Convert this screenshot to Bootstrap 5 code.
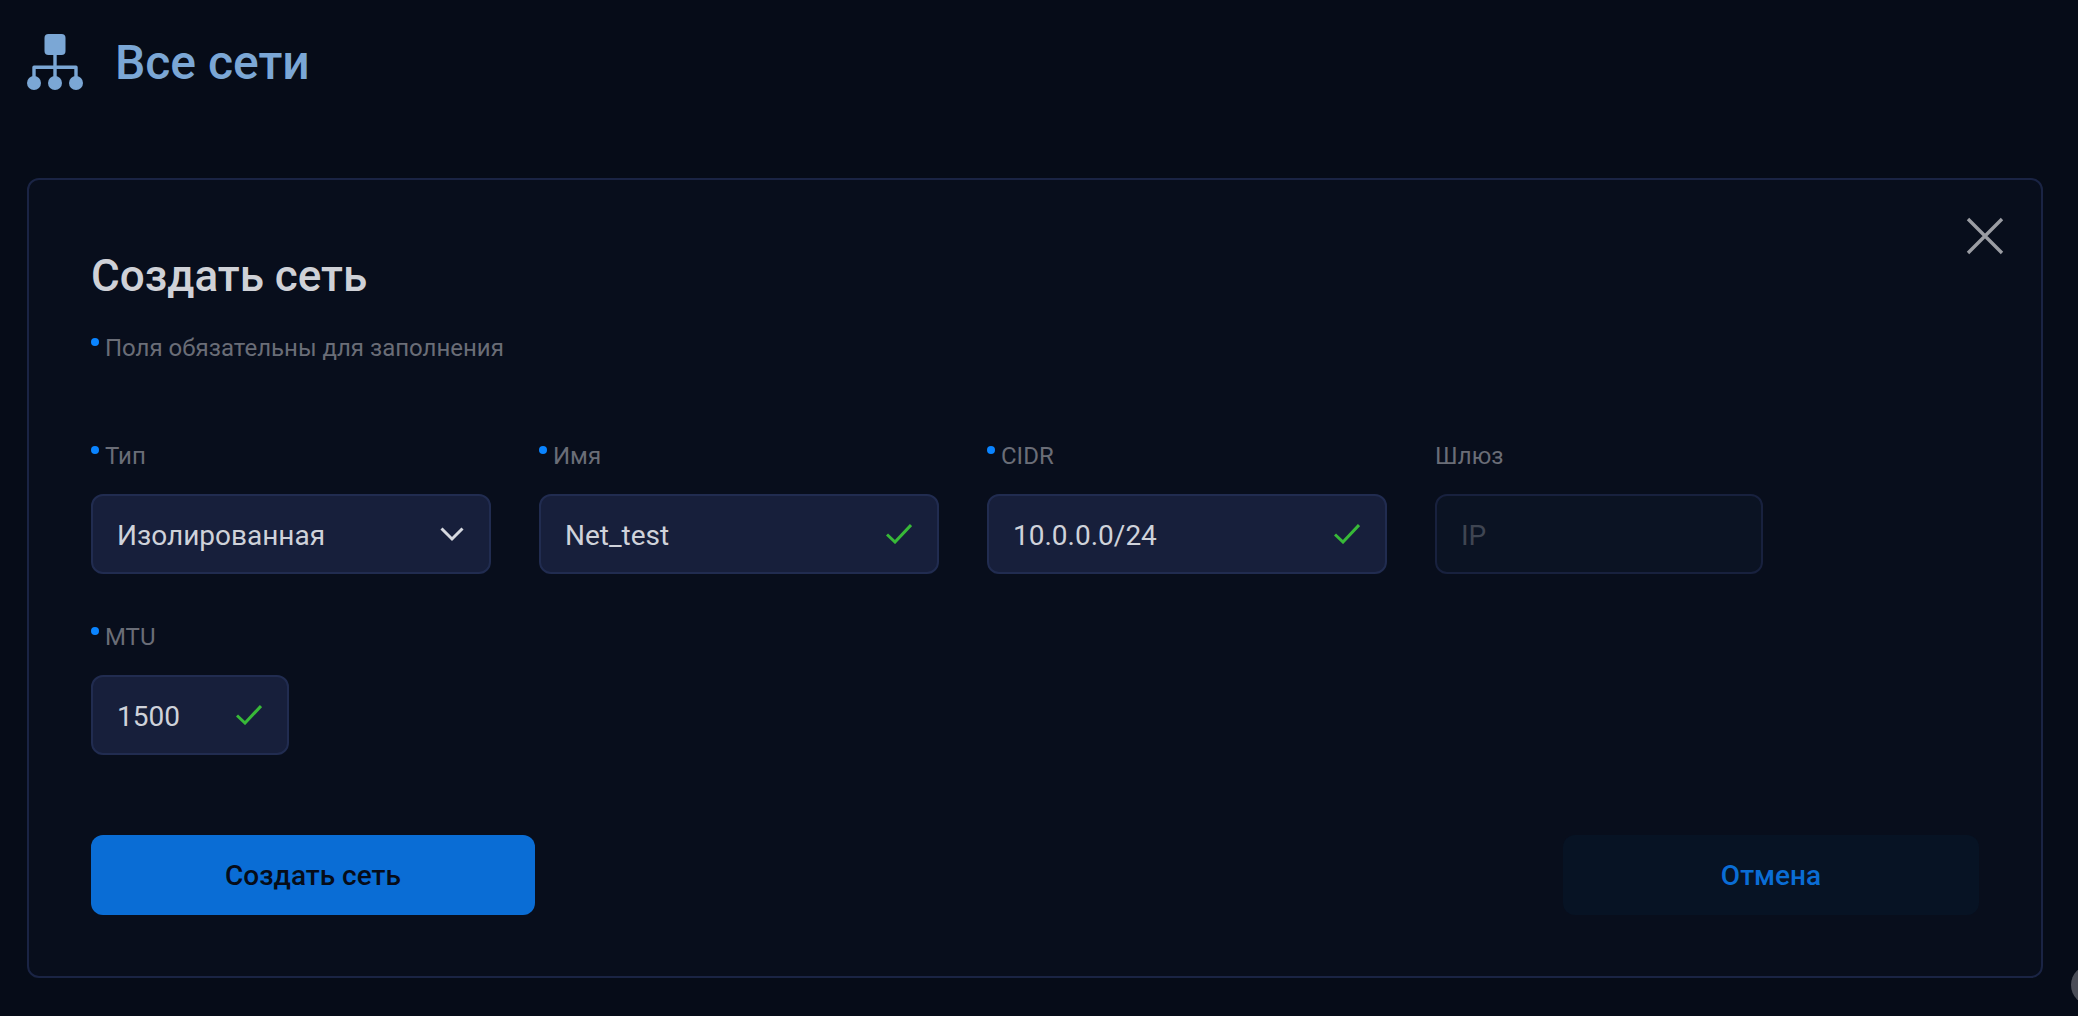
<!DOCTYPE html>
<html lang="ru">
<head>
<meta charset="utf-8">
<title>Все сети</title>
<link href="https://cdn.jsdelivr.net/npm/bootstrap@5.3.0/dist/css/bootstrap.min.css" rel="stylesheet">
<style>
html,body{height:100%;}
body{background:#060c18;font-family:Roboto,"Liberation Sans",sans-serif;overflow:hidden;padding:34px 35px 0 27px;}
.page-head{height:56px;gap:32px;margin-bottom:88px;}
.page-title{font-size:48px;font-weight:500;line-height:56px;color:#7ba7d5;margin:0;padding-top:2px;}
.net-card{height:800px;background:#080e1c;border:2px solid #1a2444;border-radius:12px;padding:70px 62px 0 62px;}
.close-x{top:36px;right:36px;width:40px;height:40px;padding:0;background:none;border:0;}
.form-head{font-size:44px;font-weight:500;line-height:52px;color:#cfd1d7;margin:0 0 32px;}
.req-note,.fld-label{font-size:24px;line-height:28px;color:#6a6d77;margin:0;}
.req-note{margin-bottom:80px;}
.fld-label{margin-bottom:24px;}
.req-dot{display:inline-block;width:8px;height:8px;border-radius:50%;background:#0a84ff;margin-right:6px;vertical-align:10px;}
.fld-grid{gap:48px;}
.fld-row{margin-bottom:49px;}
.fld{height:80px;background:#171f3b;border:2px solid #212c50;border-radius:12px;color:#cfd2da;font-size:28px;line-height:32px;padding:0 24px;}
.fld>span{padding-top:3px;}
.fld>svg{margin-right:1px;}
.fld-wide{width:400px;}
.fld-gate{width:328px;background:#0b1323;border-color:#18213e;color:#3f4552;}
.fld-short{width:198px;}
.act-btn{height:80px;font-size:28px;font-weight:500;border:0;border-radius:12px;padding-top:8px;}
.act-create{width:444px;background:#0a6dd5;color:#060c18;}
.act-cancel{width:416px;background:#071324;color:#0a6dd5;}
.actions{margin-top:80px;}
.float-blob{right:-33px;bottom:11px;width:40px;height:40px;border-radius:50%;background:#4a4d57;}
</style>
</head>
<body>
<header class="page-head d-flex align-items-center">
  <svg width="56" height="56" viewBox="0 0 56 56" fill="#7ba7d5" aria-hidden="true">
    <rect x="17.500" y="0" width="21" height="21" rx="4"/>
    <path d="M28 20V44M7 44V33.200H49V44" fill="none" stroke="#7ba7d5" stroke-width="3.400" stroke-linejoin="round"/>
    <circle cx="7" cy="49" r="7"/><circle cx="28" cy="49" r="7"/><circle cx="49" cy="49" r="7"/>
  </svg>
  <h1 class="page-title">Все сети</h1>
</header>

<main class="net-card position-relative">
  <button class="close-x position-absolute" type="button" aria-label="Закрыть">
    <svg width="40" height="40" viewBox="0 0 40 40" stroke="#9b9da3" stroke-width="3.400" fill="none" aria-hidden="true"><path d="M3 3l34 34M37 3L3 37"/></svg>
  </button>
  <h2 class="form-head">Создать сеть</h2>
  <p class="req-note"><span class="req-dot"></span>Поля обязательны для заполнения</p>

  <div class="d-flex fld-grid fld-row">
    <div>
      <div class="fld-label"><span class="req-dot"></span>Тип</div>
      <div class="fld fld-wide d-flex align-items-center justify-content-between">
        <span>Изолированная</span>
        <svg width="24" height="16" viewBox="0 0 24 16" fill="none" stroke="#d6d8df" stroke-width="3" aria-hidden="true"><path d="M1.500 2.500L12 13 22.500 2.500"/></svg>
      </div>
    </div>
    <div>
      <div class="fld-label"><span class="req-dot"></span>Имя</div>
      <div class="fld fld-wide d-flex align-items-center justify-content-between">
        <span>Net_test</span>
        <svg width="26" height="20" viewBox="0 0 26 20" fill="none" stroke="#38b938" stroke-width="3" aria-hidden="true"><path d="M1 10.500L9 18 25 1"/></svg>
      </div>
    </div>
    <div>
      <div class="fld-label"><span class="req-dot"></span>CIDR</div>
      <div class="fld fld-wide d-flex align-items-center justify-content-between">
        <span>10.0.0.0/24</span>
        <svg width="26" height="20" viewBox="0 0 26 20" fill="none" stroke="#38b938" stroke-width="3" aria-hidden="true"><path d="M1 10.500L9 18 25 1"/></svg>
      </div>
    </div>
    <div>
      <div class="fld-label">Шлюз</div>
      <div class="fld fld-gate d-flex align-items-center"><span>IP</span></div>
    </div>
  </div>

  <div>
    <div class="fld-label"><span class="req-dot"></span>MTU</div>
    <div class="fld fld-short d-flex align-items-center justify-content-between">
      <span>1500</span>
      <svg width="26" height="20" viewBox="0 0 26 20" fill="none" stroke="#38b938" stroke-width="3" aria-hidden="true"><path d="M1 10.500L9 18 25 1"/></svg>
    </div>
  </div>

  <div class="actions d-flex justify-content-between">
    <button type="button" class="btn act-btn act-create">Создать сеть</button>
    <button type="button" class="btn act-btn act-cancel">Отмена</button>
  </div>
</main>

<div class="float-blob position-fixed"></div>
<script src="https://cdn.jsdelivr.net/npm/bootstrap@5.3.0/dist/js/bootstrap.bundle.min.js"></script>
</body>
</html>
